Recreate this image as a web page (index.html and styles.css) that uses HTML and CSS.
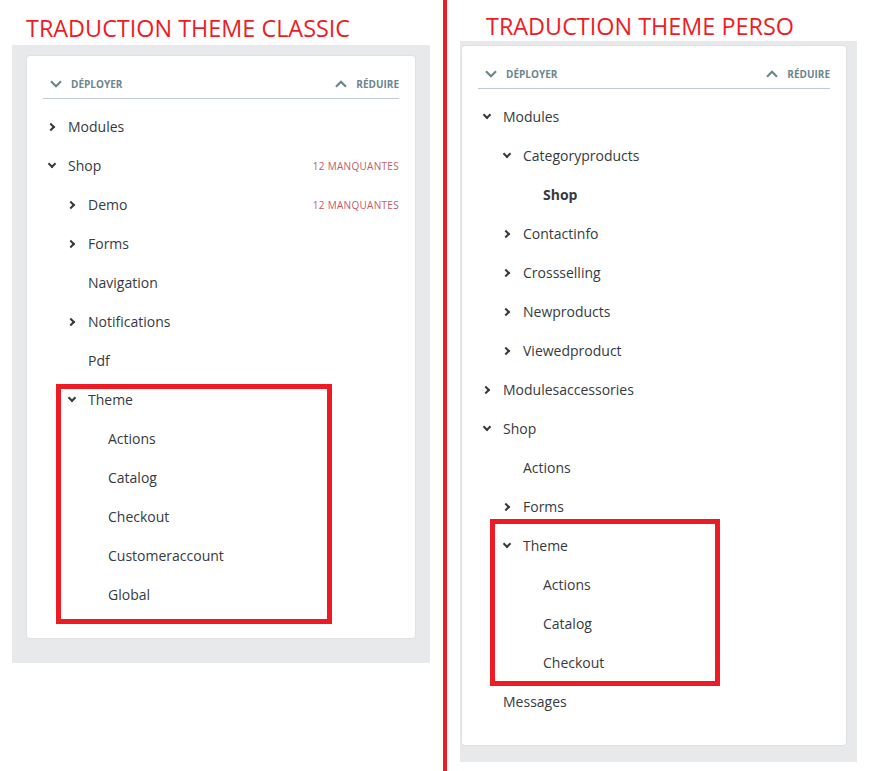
FILE: index.html
```html
<!DOCTYPE html>
<html lang="fr">
<head>
    <meta charset="UTF-8">
    <meta name="viewport" content="width=device-width, initial-scale=1.0">
    <title>Traduction theme classic / perso</title>
    <link rel="stylesheet" href="styles.css">
</head>
<body>
    <div class="compare">
        <section class="col col-classic">
            <h2 class="title">TRADUCTION THEME CLASSIC</h2>
            <div class="panel">
                <div class="card">
                    <div class="tree-head">
                        <span class="toggle">
                            <svg width="12" height="8" viewBox="0 0 12 8"><path d="M1 1.2 L6 6.2 L11 1.2"/></svg>
                            Déployer
                        </span>
                        <span class="toggle">
                            <svg width="12" height="8" viewBox="0 0 12 8"><path d="M1 6.8 L6 1.8 L11 6.8"/></svg>
                            Réduire
                        </span>
                    </div>
                    <ul class="tree">
                        <li class="node lvl-1"><span class="caret closed"></span><span class="name">Modules</span></li>
                        <li class="node lvl-1"><span class="caret open"></span><span class="name">Shop</span><span class="missing">12 manquantes</span></li>
                        <li class="node lvl-2"><span class="caret closed"></span><span class="name">Demo</span><span class="missing">12 manquantes</span></li>
                        <li class="node lvl-2"><span class="caret closed"></span><span class="name">Forms</span></li>
                        <li class="node lvl-2"><span class="caret"></span><span class="name">Navigation</span></li>
                        <li class="node lvl-2"><span class="caret closed"></span><span class="name">Notifications</span></li>
                        <li class="node lvl-2"><span class="caret"></span><span class="name">Pdf</span></li>
                        <li class="node lvl-2"><span class="caret open"></span><span class="name">Theme</span></li>
                        <li class="node lvl-3"><span class="caret"></span><span class="name">Actions</span></li>
                        <li class="node lvl-3"><span class="caret"></span><span class="name">Catalog</span></li>
                        <li class="node lvl-3"><span class="caret"></span><span class="name">Checkout</span></li>
                        <li class="node lvl-3"><span class="caret"></span><span class="name">Customeraccount</span></li>
                        <li class="node lvl-3"><span class="caret"></span><span class="name">Global</span></li>
                    </ul>
                    <div class="mark mark-classic"></div>
                </div>
            </div>
        </section>

        <div class="divider"></div>

        <section class="col col-perso">
            <h2 class="title">TRADUCTION THEME PERSO</h2>
            <div class="panel">
                <div class="card">
                    <div class="tree-head">
                        <span class="toggle">
                            <svg width="12" height="8" viewBox="0 0 12 8"><path d="M1 1.2 L6 6.2 L11 1.2"/></svg>
                            Déployer
                        </span>
                        <span class="toggle">
                            <svg width="12" height="8" viewBox="0 0 12 8"><path d="M1 6.8 L6 1.8 L11 6.8"/></svg>
                            Réduire
                        </span>
                    </div>
                    <ul class="tree">
                        <li class="node lvl-1"><span class="caret open"></span><span class="name">Modules</span></li>
                        <li class="node lvl-2"><span class="caret open"></span><span class="name">Categoryproducts</span></li>
                        <li class="node lvl-3"><span class="caret"></span><span class="name bold">Shop</span></li>
                        <li class="node lvl-2"><span class="caret closed"></span><span class="name">Contactinfo</span></li>
                        <li class="node lvl-2"><span class="caret closed"></span><span class="name">Crossselling</span></li>
                        <li class="node lvl-2"><span class="caret closed"></span><span class="name">Newproducts</span></li>
                        <li class="node lvl-2"><span class="caret closed"></span><span class="name">Viewedproduct</span></li>
                        <li class="node lvl-1"><span class="caret closed"></span><span class="name">Modulesaccessories</span></li>
                        <li class="node lvl-1"><span class="caret open"></span><span class="name">Shop</span></li>
                        <li class="node lvl-2"><span class="caret"></span><span class="name">Actions</span></li>
                        <li class="node lvl-2"><span class="caret closed"></span><span class="name">Forms</span></li>
                        <li class="node lvl-2"><span class="caret open"></span><span class="name">Theme</span></li>
                        <li class="node lvl-3"><span class="caret"></span><span class="name">Actions</span></li>
                        <li class="node lvl-3"><span class="caret"></span><span class="name">Catalog</span></li>
                        <li class="node lvl-3"><span class="caret"></span><span class="name">Checkout</span></li>
                        <li class="node lvl-1"><span class="caret"></span><span class="name">Messages</span></li>
                    </ul>
                    <div class="mark mark-perso"></div>
                </div>
            </div>
        </section>
    </div>
</body>
</html>
```

FILE: styles.css
```css
body {
    margin: 0;
    font-family: "Open Sans", sans-serif;
    background-color: #fff;
    color: #363a41;
}
.compare {
    display: flex;
    min-height: 100vh;
    padding-left: 12px;
}
.col-classic {
    width: 418px;
}
.col-perso {
    width: 397px;
    margin-left: 13px;
}
.divider {
    width: 4px;
    margin-left: 13px;
    background-color: #ed1c24;
}
.title {
    margin: 0;
    font-size: 23.4px;
    line-height: 24px;
    font-weight: 400;
    color: #ee1c25;
}
.col-classic .title {
    padding: 16px 0 0 14px;
    margin-bottom: 5px;
}
.col-perso .title {
    padding: 14px 0 0 26px;
    margin-bottom: 3px;
}
.panel {
    background-color: #e8e9eb;
}
.col-classic .panel {
    padding: 11px 15px 25px 15px;
}
.col-perso .panel {
    padding: 5px 11px 17px 2px;
}
.card {
    position: relative;
    background-color: #fff;
    border-radius: 3px;
    box-shadow: 0 0 2px rgba(0, 0, 0, 0.12);
    padding: 0 16px 24px;
}
.tree-head {
    display: flex;
    justify-content: space-between;
    align-items: center;
    height: 22px;
    padding: 17px 0 3px 7px;
    border-bottom: 1px solid #bbcdd2;
}
.toggle {
    display: flex;
    align-items: center;
    gap: 9px;
    font-size: 10px;
    font-weight: 700;
    text-transform: uppercase;
    color: #6c868e;
}
.toggle svg path {
    fill: none;
    stroke: #6c868e;
    stroke-width: 2.2;
}
.tree {
    list-style: none;
    margin: 0;
    padding: 8px 0 0;
}
.node {
    display: flex;
    align-items: center;
    height: 39px;
    font-size: 14px;
}
.lvl-1 { padding-left: 4px; }
.lvl-2 { padding-left: 24px; }
.lvl-3 { padding-left: 44px; }
.caret {
    width: 10px;
    height: 10px;
    margin-right: 11px;
    flex-shrink: 0;
    position: relative;
}
.caret.closed::before,
.caret.open::before {
    content: "";
    position: absolute;
    width: 6px;
    height: 6px;
    border-right: 2px solid #363a41;
    border-bottom: 2px solid #363a41;
    box-sizing: border-box;
}
.caret.closed::before {
    left: 1px;
    top: 2px;
    transform: rotate(-45deg);
}
.caret.open::before {
    left: 2px;
    top: 0px;
    transform: rotate(45deg);
}
.name.bold {
    font-weight: 700;
}
.missing {
    margin-left: auto;
    font-size: 10px;
    letter-spacing: 0.3px;
    text-transform: uppercase;
    color: #c05c67;
}
.mark {
    position: absolute;
    box-sizing: border-box;
    border: 5px solid #ed1c24;
}
.mark-classic {
    left: 29px;
    top: 328px;
    width: 276px;
    height: 240px;
}
.mark-perso {
    left: 28px;
    top: 473px;
    width: 230px;
    height: 167px;
}
```
